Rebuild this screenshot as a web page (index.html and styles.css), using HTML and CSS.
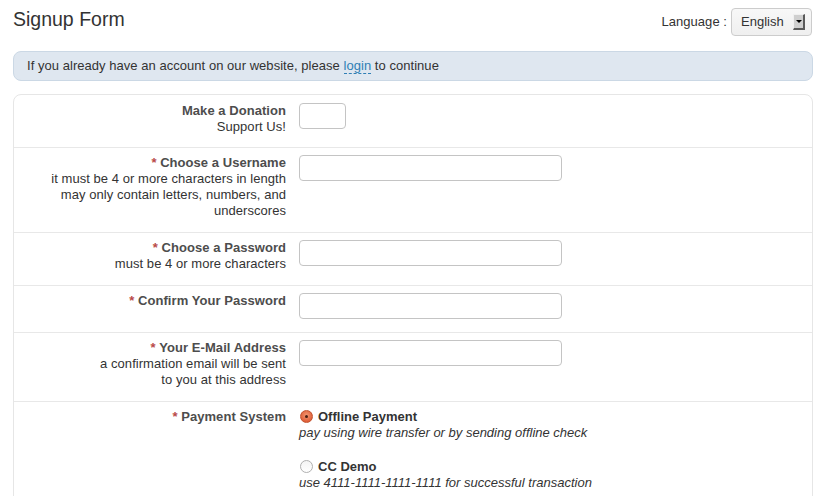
FILE: index.html
```html
<!DOCTYPE html>
<html lang="en">
<head>
<meta charset="utf-8">
<title>Signup Form</title>
<link rel="stylesheet" href="styles.css">
</head>
<body>
<div class="page">
  <header class="header">
    <h1 class="title">Signup Form</h1>
    <div class="lang">
      <span class="lang-label">Language :</span>
      <div class="select">
        <span class="select-text">English</span>
        <span class="select-btn"><span class="tri"></span></span>
      </div>
    </div>
  </header>

  <div class="info">If you already have an account on our website, please <a class="link" href="#">login</a> to continue</div>

  <div class="form">
    <div class="row row-first">
      <div class="label"><span class="name">Make a Donation</span><br>Support Us!</div>
      <div class="field"><span class="input input-sm"></span></div>
    </div>
    <div class="row">
      <div class="label"><span class="req">*</span> <span class="name">Choose a Username</span><br>it must be 4 or more characters in length<br>may only contain letters, numbers, and<br>underscores</div>
      <div class="field"><span class="input"></span></div>
    </div>
    <div class="row">
      <div class="label"><span class="req">*</span> <span class="name">Choose a Password</span><br>must be 4 or more characters</div>
      <div class="field"><span class="input"></span></div>
    </div>
    <div class="row">
      <div class="label"><span class="req">*</span> <span class="name">Confirm Your Password</span></div>
      <div class="field"><span class="input"></span></div>
    </div>
    <div class="row">
      <div class="label"><span class="req">*</span> <span class="name">Your E-Mail Address</span><br>a confirmation email will be sent<br>to you at this address</div>
      <div class="field"><span class="input"></span></div>
    </div>
    <div class="row row-last">
      <div class="label"><span class="req">*</span> <span class="name">Payment System</span></div>
      <div class="field">
        <div class="option">
          <div class="opt-title"><span class="radio radio-on"><span class="dot"></span></span><b>Offline Payment</b></div>
          <div class="opt-desc">pay using wire transfer or by sending offline check</div>
        </div>
        <div class="option">
          <div class="opt-title"><span class="radio"></span><b>CC Demo</b></div>
          <div class="opt-desc">use 4111-1111-1111-1111 for successful transaction</div>
        </div>
      </div>
    </div>
  </div>
</div>
</body>
</html>
```

FILE: styles.css
```css
html, body {
  margin: 0;
  padding: 0;
  background: #ffffff;
}
body {
  font-family: "Liberation Sans", Arial, sans-serif;
  font-size: 13px;
  line-height: 16px;
  color: #333333;
  overflow: hidden;
}
.page {
  padding: 0 13px;
}
.header {
  display: flex;
  justify-content: space-between;
  align-items: flex-start;
  padding-top: 8px;
  margin-bottom: 15px;
  height: 28px;
}
.title {
  margin: 0;
  font-size: 19.5px;
  line-height: 22px;
  font-weight: normal;
  color: #333333;
}
.lang {
  display: flex;
  align-items: center;
  gap: 4px;
  margin-right: 1px;
}
.lang-label {
  color: #333333;
  letter-spacing: 0.05px;
}
.select {
  box-sizing: border-box;
  width: 81px;
  height: 28px;
  border: 1px solid #cccccc;
  border-radius: 4px;
  background: linear-gradient(#f8f8f8, #efefef);
  display: flex;
  align-items: center;
  padding-left: 9px;
}
.select-text {
  flex: 1;
  color: #333333;
}
.select-btn {
  box-sizing: border-box;
  width: 12px;
  height: 16px;
  margin-right: 6px;
  background: #cfcfcf;
  border-top: 1px solid #f0f0f0;
  border-left: 1px solid #f0f0f0;
  border-right: 2px solid #5a5a5a;
  border-bottom: 2px solid #5a5a5a;
  display: flex;
  align-items: center;
  justify-content: center;
}
.tri {
  width: 0;
  height: 0;
  border-left: 3px solid transparent;
  border-right: 3px solid transparent;
  border-top: 3px solid #000000;
}
.info {
  background: #dfe7f0;
  border: 1px solid #cbd8e5;
  border-radius: 8px;
  padding: 6px 13px;
  margin-bottom: 13px;
  color: #333333;
  letter-spacing: 0.04px;
}
.link {
  color: #2f7fb5;
  text-decoration: none;
  border-bottom: 1px dashed #2f7fb5;
}
.form {
  border: 1px solid #e6e6e6;
  border-radius: 8px;
  height: 420px;
}
.row {
  display: flex;
  padding: 7px 0 13px;
  border-bottom: 1px solid #e8e8e8;
}
.row-first {
  padding-top: 8px;
  padding-bottom: 12px;
}
.row-last {
  border-bottom: none;
}
.label {
  width: 272px;
  flex: none;
  text-align: right;
  white-space: nowrap;
  color: #333333;
  letter-spacing: 0.05px;
}
.name {
  font-weight: bold;
  color: #4d4d4d;
}
.req {
  color: #b94a48;
  font-weight: bold;
}
.field {
  margin-left: 13px;
}
.input {
  display: block;
  box-sizing: border-box;
  width: 263px;
  height: 26px;
  border: 1px solid #c4c4c4;
  border-radius: 4px;
  background: #ffffff;
}
.input-sm {
  width: 47px;
}
.option {
  margin-bottom: 18px;
}
.opt-title {
  display: flex;
  align-items: center;
  color: #333333;
}
.opt-title b {
  font-weight: bold;
  margin-left: 5px;
}
.opt-desc {
  font-style: italic;
  color: #333333;
}
.radio {
  box-sizing: border-box;
  width: 13px;
  height: 13px;
  border-radius: 50%;
  border: 1px solid #b0b0b0;
  background: linear-gradient(#f4f4f4, #ffffff);
  margin-left: 1px;
  margin-top: -2px;
  display: flex;
  align-items: center;
  justify-content: center;
}
.radio-on {
  border-color: #c2532f;
  background: radial-gradient(circle at 50% 40%, #f39a74, #e0603a 70%, #c9502c);
}
.dot {
  width: 3px;
  height: 3px;
  border-radius: 50%;
  background: #4a1d10;
}
```
